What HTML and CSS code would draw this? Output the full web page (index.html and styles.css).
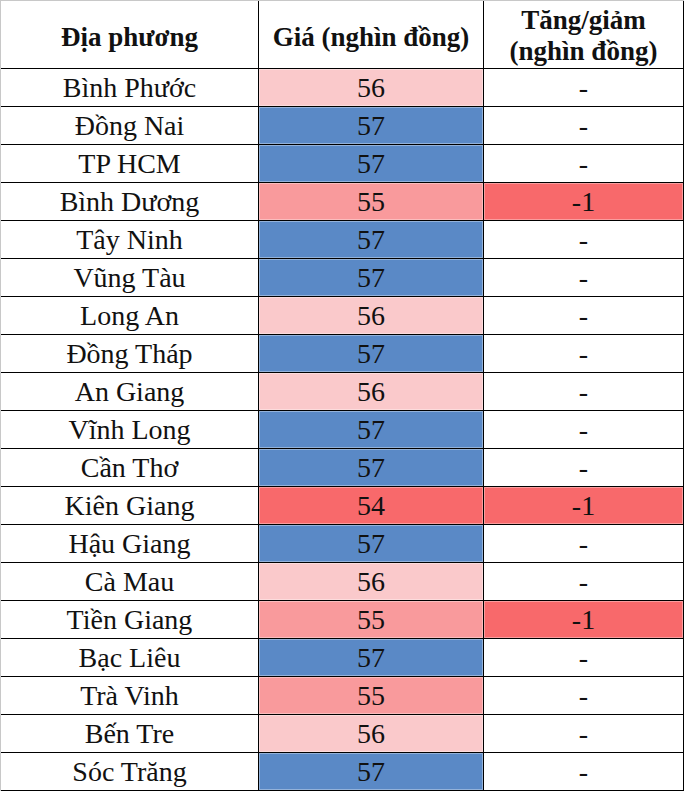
FILE: index.html
```html
<!DOCTYPE html>
<html lang="vi">
<head>
<meta charset="utf-8">
<link rel="stylesheet" href="styles.css">
</head>
<body>
<table class="price">
  <tr>
    <th class="c1">Địa phương</th>
    <th class="c2">Giá (nghìn đồng)</th>
    <th class="c3 two">Tăng/giảm<br>(nghìn đồng)</th>
  </tr>
  <tr><td>Bình Phước</td><td class="c56">56</td><td>-</td></tr>
  <tr><td>Đồng Nai</td><td class="c57">57</td><td>-</td></tr>
  <tr><td>TP HCM</td><td class="c57">57</td><td>-</td></tr>
  <tr><td>Bình Dương</td><td class="c55">55</td><td class="dn">-1</td></tr>
  <tr><td>Tây Ninh</td><td class="c57">57</td><td>-</td></tr>
  <tr><td>Vũng Tàu</td><td class="c57">57</td><td>-</td></tr>
  <tr><td>Long An</td><td class="c56">56</td><td>-</td></tr>
  <tr><td>Đồng Tháp</td><td class="c57">57</td><td>-</td></tr>
  <tr><td>An Giang</td><td class="c56">56</td><td>-</td></tr>
  <tr><td>Vĩnh Long</td><td class="c57">57</td><td>-</td></tr>
  <tr><td>Cần Thơ</td><td class="c57">57</td><td>-</td></tr>
  <tr><td>Kiên Giang</td><td class="c54">54</td><td class="dn">-1</td></tr>
  <tr><td>Hậu Giang</td><td class="c57">57</td><td>-</td></tr>
  <tr><td>Cà Mau</td><td class="c56">56</td><td>-</td></tr>
  <tr><td>Tiền Giang</td><td class="c55">55</td><td class="dn">-1</td></tr>
  <tr><td>Bạc Liêu</td><td class="c57">57</td><td>-</td></tr>
  <tr><td>Trà Vinh</td><td class="c55">55</td><td>-</td></tr>
  <tr><td>Bến Tre</td><td class="c56">56</td><td>-</td></tr>
  <tr><td>Sóc Trăng</td><td class="c57">57</td><td>-</td></tr>
</table>
</body>
</html>
```
FILE: styles.css
```css
html, body {
  margin: 0;
  padding: 0;
  background: #ffffff;
}
.price {
  border-collapse: separate;
  border-spacing: 0;
  table-layout: fixed;
  border-left: 1px solid #c8c8c8;
  border-top: 1px solid #c8c8c8;
  color: #111111;
  font-family: "Liberation Serif", "Times New Roman", serif;
}
.price th,
.price td {
  font-family: "Liberation Serif", "Times New Roman", serif;
  font-size: 28px;
  padding: 2px 0 0 0;
  height: 35px;
  text-align: center;
  vertical-align: middle;
  border-right: 1px solid #000000;
  border-bottom: 1px solid #000000;
  line-height: 1.1;
  background: #ffffff;
}
.price th {
  font-weight: bold;
  font-size: 27px;
  height: 61px;
  padding-top: 6px;
}
.price th.two {
  line-height: 31px;
  padding-top: 2px;
  height: 65px;
}
.c1 { width: 257px; }
.c2 { width: 224px; }
.c3 { width: 199px; }
.c54, .c55, .c56, .c57, .dn {
  box-shadow: inset 0 0 0 1px rgba(255, 255, 255, 0.35);
}
.price .c54 { background: #f8696b; }
.price .c55 { background: #f99a9c; }
.price .c56 { background: #fac9cb; }
.price .c57 { background: #5a89c6; }
.price .dn { background: #f8696b; }
```
